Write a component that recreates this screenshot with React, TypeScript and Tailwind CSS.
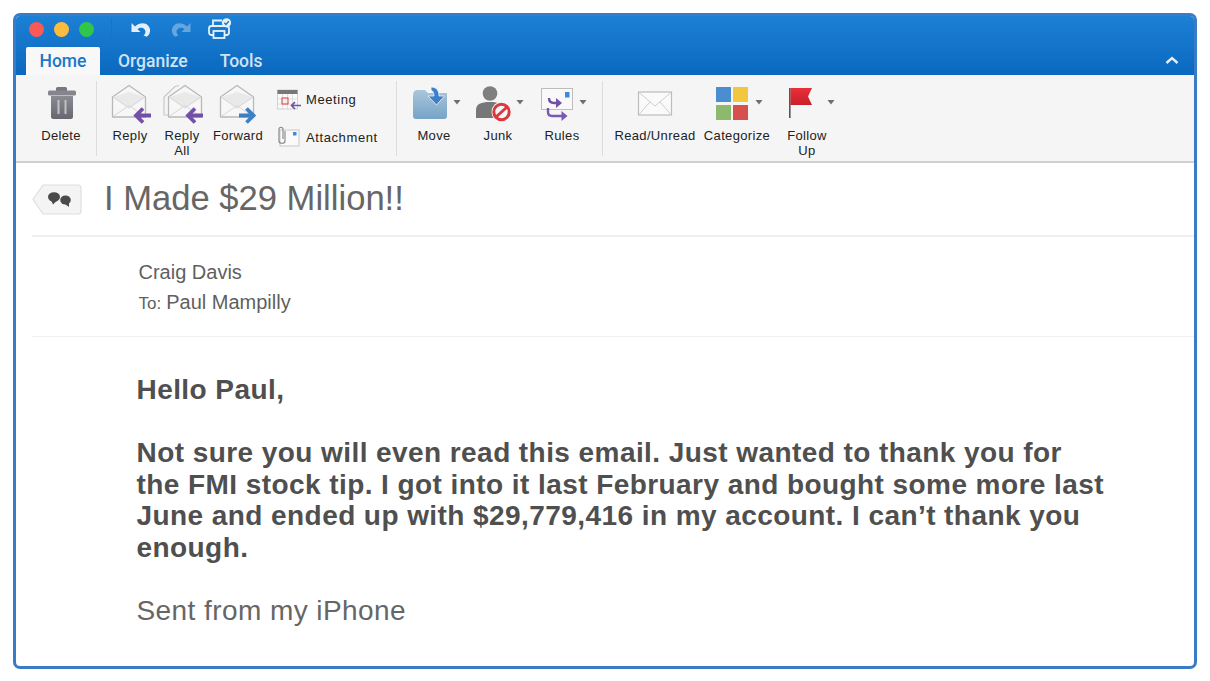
import React from "react";

const Box = ({ x, w, y = 84, h = 40, children }: { x: number; w: number; y?: number; h?: number; children: React.ReactNode }) => (
  <svg width={w} height={h} viewBox={`${x} ${y} ${w} ${h}`} className="block overflow-visible">
    {children}
  </svg>
);

const OpenEnvelope = ({ dx = 0 }: { dx?: number }) => (
  <g transform={`translate(${dx} 0)`}>
    <path d="M112.5 97 L129 85.5 L145.5 97 V117 H112.5 Z" fill="#f7f7f7" stroke="#b8b8b8" strokeWidth="1.3" strokeLinejoin="round" />
    <path d="M113 97 L129 108 L145 97 L129 92 Z" fill="#e9e9e9" />
    <path d="M113 116.5 L129 105.5 L145 116.5 M113 97 L129 108 L145 97" fill="none" stroke="#d6d6d6" strokeWidth="1" />
  </g>
);

const ArrowLeft = ({ dx = 0 }: { dx?: number }) => (
  <path transform={`translate(${dx} 0)`} d="M151 115.5 H136 M143 108.5 L136 115.5 L143 122.5" fill="none" stroke="#7250a8" strokeWidth="3.8" />
);

const Caret = ({ x, y = 102 }: { x: number; y?: number }) => <path d={`M${x - 3.5} ${y - 2} H${x + 3.5} L${x} ${y + 2.5} Z`} fill="#707070" />;

const RibbonButton = ({ w, ml, label, x, children }: { w: number; ml: number; label: React.ReactNode; x: number; children: React.ReactNode }) => (
  <div style={{ width: w, marginLeft: ml }} className="flex flex-col items-center pt-[9px] shrink-0">
    <Box x={x} w={w}>{children}</Box>
    <div className="mt-[4px] text-center text-[13px] leading-[15px] text-[#222] tracking-[0.35px] whitespace-nowrap">{label}</div>
  </div>
);

const Sep = ({ ml }: { ml: number }) => <div style={{ marginLeft: ml }} className="w-px h-[75px] mt-[6px] bg-[#dcdcdc] shrink-0" />;

const CurvedArrow = ({ fill }: { fill: string }) => (
  <svg width="20" height="15" viewBox="0 0 20 15" className="block">
    <path d="M0.5 1 V10 H9.5 L6.6 7.2 C8.5 5.3 11.6 5.3 13.3 7 C15.2 9 14.6 11.6 12.5 13.6 L15.8 14.8 C19.5 12 20.3 7.2 17.2 3.7 C14 0.2 8.7 0.5 4 4.6 Z" fill={fill} />
  </svg>
);

export default function App() {
  return (
    <div className="w-[1210px] h-[681px] bg-white p-[13px] overflow-hidden font-['Liberation_Sans',Arial,sans-serif]">
      <div className="h-[656px] border-[3px] border-[#3a7bc8] rounded-[7px] overflow-hidden flex flex-col bg-white">
        <div className="bg-gradient-to-b from-[#1c80d4] to-[#0a69bf]">
          {/* title bar */}
          <div className="h-[31px] flex items-center pl-[13px] pb-[5px]">
            <span className="w-[15px] h-[15px] rounded-full bg-[#f95a55]" />
            <span className="w-[15px] h-[15px] rounded-full bg-[#fdbb3f] ml-[10px]" />
            <span className="w-[15px] h-[15px] rounded-full bg-[#30c748] ml-[10px]" />
            <span className="w-px h-[22px] bg-[#2a6fb5] ml-[17px]" />
            <span className="ml-[19px]"><CurvedArrow fill="#e2eefa" /></span>
            <span className="ml-[20px] scale-x-[-1]"><CurvedArrow fill="#66a6de" /></span>
            <span className="ml-[17px] -mt-[1px]">
              <svg width="24" height="21" viewBox="0 0 24 21" className="block">
                <path d="M5 9 V2.5 H14 M17 9 V7" fill="none" stroke="#e6f0fa" strokeWidth="1.8" />
                <rect x="1" y="8" width="20" height="9" rx="2.5" fill="none" stroke="#e6f0fa" strokeWidth="1.8" />
                <rect x="5.5" y="13" width="11" height="7" fill="#1474c8" stroke="#e6f0fa" strokeWidth="1.8" />
                <circle cx="18.5" cy="4.8" r="4.6" fill="#e6f0fa" />
                <path d="M16.3 4.8 L17.9 6.5 L20.8 3.2" fill="none" stroke="#1474c8" strokeWidth="1.3" />
              </svg>
            </span>
          </div>
          {/* tabs */}
          <div className="h-[28px] flex items-end pl-[10px] pr-[15px] text-[17.5px] font-medium font-['Roboto',sans-serif]">
            <div className="w-[74px] h-[28px] bg-[#f8f8f8] rounded-t-[2px] flex items-center justify-center text-[#1a77c9]">Home</div>
            <div className="h-[28px] flex items-center ml-[18px] text-[#cfe3f6]">Organize</div>
            <div className="h-[28px] flex items-center ml-[32px] text-[#cfe3f6]">Tools</div>
            <div className="ml-auto h-[28px] flex items-center">
              <svg width="14" height="9" viewBox="0 0 14 9" className="block -mt-[1px]">
                <path d="M1.5 7 L7 2 L12.5 7" fill="none" stroke="#e4f0fb" strokeWidth="2.4" />
              </svg>
            </div>
          </div>
        </div>

        {/* ribbon */}
        <div className="h-[88px] shrink-0 bg-[#f5f5f5] border-b-2 border-[#d0d0d0] flex items-start">
          <RibbonButton w={50} ml={20} x={36} label="Delete">
            <defs>
              <linearGradient id="trash" x1="0" y1="0" x2="0" y2="1">
                <stop offset="0" stopColor="#8b8b93" />
                <stop offset="1" stopColor="#67676f" />
              </linearGradient>
              <linearGradient id="folder" x1="0" y1="0" x2="0" y2="1">
                <stop offset="0" stopColor="#a9c6db" />
                <stop offset="1" stopColor="#76a3c6" />
              </linearGradient>
              <linearGradient id="flag" x1="0" y1="0" x2="0" y2="1">
                <stop offset="0" stopColor="#e8303a" />
                <stop offset="1" stopColor="#c91f2a" />
              </linearGradient>
            </defs>
            <rect x="56" y="87" width="11" height="5" rx="1.5" fill="#77777f" />
            <rect x="48" y="90.5" width="28" height="5" rx="1.5" fill="#85858d" />
            <path d="M51 96 H73 V116.5 Q73 119 70.5 119 H53.5 Q51 119 51 116.5 Z" fill="url(#trash)" />
            <rect x="57.5" y="100" width="2" height="14" fill="#c0c0c6" />
            <rect x="64.5" y="100" width="2" height="14" fill="#c0c0c6" />
          </RibbonButton>
          <Sep ml={10} />
          <RibbonButton w={50} ml={8} x={105} label="Reply">
            <OpenEnvelope />
            <ArrowLeft />
          </RibbonButton>
          <RibbonButton w={50} ml={2} x={157} label={<>Reply<br />All</>}>
            <path d="M164 97 L175 86.5 L179 85.5" fill="none" stroke="#c8c8c8" strokeWidth="1.2" />
            <path d="M164 97 V115 H168" fill="none" stroke="#c8c8c8" strokeWidth="1.2" />
            <OpenEnvelope dx={56} />
            <ArrowLeft dx={52} />
          </RibbonButton>
          <RibbonButton w={56} ml={3} x={210} label="Forward">
            <OpenEnvelope dx={108} />
            <path d="M239 115.5 H253.5 M246.5 108.5 L253.5 115.5 L246.5 122.5" fill="none" stroke="#3d7fc4" strokeWidth="3.8" />
          </RibbonButton>
          <div className="ml-[10px] w-[120px] shrink-0 flex flex-col text-[13px] text-[#222] tracking-[0.6px]">
            <div className="h-[24px] mt-[13px] flex items-center gap-[7px]">
              <Box x={276} w={23} y={88} h={24}>
                <rect x="277.5" y="90" width="20" height="19" fill="#fafafa" stroke="#c9c9c9" strokeWidth="0.8" />
                <rect x="277.5" y="90" width="20" height="4" fill="#777" />
                <path d="M282.5 94 V109 M287.5 94 V109 M292.5 94 V109 M277.5 99 H297.5 M277.5 104 H297.5" stroke="#d2d2d2" strokeWidth="0.7" />
                <rect x="282" y="98" width="6" height="6" fill="#fbeeee" stroke="#d23a3a" strokeWidth="1" />
                <path d="M301 105.5 H291.5 M295 102 L291.5 105.5 L295 109" fill="none" stroke="#7250a8" strokeWidth="1.7" />
              </Box>
              <span>Meeting</span>
            </div>
            <div className="h-[24px] mt-[14px] flex items-center gap-[7px]">
              <Box x={276} w={23} y={125} h={24}>
                <rect x="280" y="129" width="19" height="16" fill="#fafafa" stroke="#c4c4c4" strokeWidth="0.9" />
                <rect x="293" y="131" width="3.5" height="3.5" fill="#3d8ae0" />
                <path d="M285 130 V140 C285 143 279 143 279 140 V128.5 C279 125.5 283 125.5 283 128.5 V138" fill="none" stroke="#8b8b8b" strokeWidth="1.2" />
              </Box>
              <span>Attachment</span>
            </div>
          </div>
          <Sep ml={0} />
          <RibbonButton w={50} ml={12} x={409} label="Move">
            <path d="M413 96 Q413 90 417 90 H425 L428 93 H447 V116 Q447 119 444 119 H416 Q413 119 413 116 Z" fill="url(#folder)" />
            <path d="M431 87 C437 87 439 91 439 96 H444.5 L436.5 105 L428 96 H434 C434 93 433 91 431 90 Z" fill="#3d7fc9" stroke="#f5f5f5" strokeWidth="0.8" />
            <Caret x={457} />
          </RibbonButton>
          <RibbonButton w={50} ml={14} x={473} label="Junk">
            <circle cx="490" cy="93.5" r="7.3" fill="#7f7f7f" />
            <path d="M476 118 V110 C476 104 481 102 490 102 C499 102 503 104 503 110 V118 Z" fill="#777" />
            <circle cx="502" cy="112" r="10.5" fill="#f5f5f5" />
            <circle cx="501.5" cy="112" r="7.7" fill="#f7f7f7" stroke="#d9393f" strokeWidth="3" />
            <path d="M496 117 L507 107" stroke="#d9393f" strokeWidth="3" />
            <Caret x={520} />
          </RibbonButton>
          <RibbonButton w={50} ml={14} x={537} label="Rules">
            <rect x="541.5" y="88.5" width="31" height="21" fill="#f9f9f9" stroke="#bdbdbd" strokeWidth="1" />
            <rect x="565" y="92" width="4.5" height="5.5" fill="#3d8ae0" />
            <path d="M549 98 Q549 103 554 103 H557" fill="none" stroke="#7250a8" strokeWidth="2.4" />
            <path d="M556 98 L562 103 L556 108 Z" fill="#7250a8" />
            <path d="M548 108 V112 Q548 116 552 116 H562" fill="none" stroke="#7a58b4" strokeWidth="2.4" />
            <path d="M561.5 111 L567.5 116 L561.5 121 Z" fill="#7a58b4" />
            <Caret x={583} />
          </RibbonButton>
          <Sep ml={15} />
          <RibbonButton w={84} ml={10} x={613} label="Read/Unread">
            <rect x="638.5" y="92" width="33" height="23" fill="#fafafa" stroke="#bcbcbc" strokeWidth="1.2" />
            <path d="M639 92.5 L655 106 L671 92.5 M639 114.5 L650 102 M671 114.5 L660 102" fill="none" stroke="#cfcfcf" strokeWidth="1" />
          </RibbonButton>
          <RibbonButton w={72} ml={4} x={701} label="Categorize">
            <rect x="716" y="87" width="15" height="15" rx="0.5" fill="#4a8ed0" />
            <rect x="733" y="87" width="15" height="15" rx="0.5" fill="#f2c73f" />
            <rect x="716" y="105" width="15" height="15" rx="0.5" fill="#8db96f" />
            <rect x="733" y="105" width="15" height="15" rx="0.5" fill="#d75050" />
            <Caret x={759} />
          </RibbonButton>
          <RibbonButton w={50} ml={9} x={782} label={<>Follow<br />Up</>}>
            <rect x="789" y="88" width="1.6" height="30" fill="#555" />
            <path d="M790.5 88 H812 L808 96.5 L812 105 H790.5 Z" fill="url(#flag)" />
            <Caret x={831} />
          </RibbonButton>
        </div>

        {/* subject */}
        <div className="ml-[16px] h-[74px] shrink-0 border-b-2 border-[#f0f0f0] flex items-center">
          <svg width="50" height="31" viewBox="0 0 50 31" className="block shrink-0">
            <path d="M11 1 H46 Q49 1 49 4 V27 Q49 30 46 30 H11 L1 15.5 Z" fill="#f4f4f4" stroke="#dedede" strokeWidth="1.2" />
            <ellipse cx="22" cy="13" rx="6" ry="4.8" fill="#4a4a4a" />
            <path d="M19 16 L21 20.5 L24.5 17 Z" fill="#4a4a4a" />
            <ellipse cx="33.5" cy="16" rx="5.3" ry="4.6" fill="#4a4a4a" />
            <path d="M33 20 L37 23 L37 18 Z" fill="#4a4a4a" />
          </svg>
          <div className="ml-[22px] text-[34.6px] leading-none text-[#666] -mt-[1px]">I Made $29 Million!!</div>
        </div>

        {/* sender */}
        <div className="ml-[16px] h-[100px] shrink-0 border-b border-[#f0f0f0] pl-[106.5px] pt-[23px] text-[#5f5f5f]">
          <div className="text-[20px] leading-[24px]">Craig Davis</div>
          <div className="mt-[6px] leading-[24px] text-[20px] flex items-baseline">
            <span className="text-[17px] mr-[5px]">To:</span>
            <span>Paul Mampilly</span>
          </div>
        </div>

        {/* body */}
        <div className="pl-[120.5px] pt-[37px] text-[28px] leading-[31.6px] text-[#4f4f4f] tracking-[0.43px]">
          <div className="font-bold">Hello Paul,</div>
          <div className="font-bold mt-[31.6px] whitespace-nowrap">
            Not sure you will even read this email. Just wanted to thank you for<br />
            the FMI stock tip. I got into it last February and bought some more last<br />
            June and ended up with $29,779,416 in my account. I can’t thank you<br />
            enough.
          </div>
          <div className="mt-[31.6px] text-[#666]">Sent from my iPhone</div>
        </div>
      </div>
    </div>
  );
}
